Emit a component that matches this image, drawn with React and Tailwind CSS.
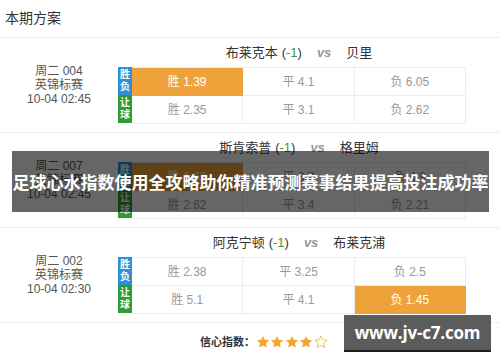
const matches = [
  {
    week: '周二 004',
    league: '英锦标赛',
    time: '10-04 02:45',
    home: '布莱克本',
    handicap: '-1',
    away: '贝里',
    rows: [
      ['胜 1.39', '平 4.1', '负 6.05'],
      ['胜 2.35', '平 3.1', '负 2.62'],
    ],
    pick: [0, 0],
  },
  {
    week: '周二 007',
    league: '英锦标赛',
    time: '10-04 02:45',
    home: '斯肯索普',
    handicap: '-1',
    away: '格里姆',
    rows: [
      ['胜 1.62', '平 3.7', '负 4.9'],
      ['胜 2.62', '平 3.4', '负 2.21'],
    ],
    pick: [0, 0],
  },
  {
    week: '周二 002',
    league: '英锦标赛',
    time: '10-04 02:30',
    home: '阿克宁顿',
    handicap: '-1',
    away: '布莱克浦',
    rows: [
      ['胜 2.38', '平 3.25', '负 2.5'],
      ['胜 5.1', '平 4.1', '负 1.45'],
    ],
    pick: [1, 2],
  },
];

function Star({ filled }) {
  return (
    <svg width="14" height="14" viewBox="0 0 24 24">
      <polygon
        points="12,1.5 15.1,8.3 22.5,9.1 17,14.1 18.5,21.5 12,17.8 5.5,21.5 7,14.1 1.5,9.1 8.9,8.3"
        fill={filled ? '#f3a62b' : 'none'}
        stroke="#f3a62b"
        strokeWidth={filled ? 0 : 1.3}
        strokeLinejoin="round"
      />
    </svg>
  );
}

function Badge({ top, bottom, color }) {
  return (
    <div className={`h-[28px] flex flex-col items-center justify-center text-[10px] leading-[12px] font-bold text-white ${color}`}>
      <span>{top}</span>
      <span>{bottom}</span>
    </div>
  );
}

function Match({ m }) {
  return (
    <div className="h-[95px] flex border-b border-[#eeeeee]">
      <div className="w-[118px] pt-[26px] text-center text-[12px] leading-[14px] text-[#555]">
        <div>{m.week}</div>
        <div>{m.league}</div>
        <div>{m.time}</div>
      </div>
      <div className="w-[348px]">
        <div className="h-[29px] pl-[14px] flex items-center justify-center text-[13px] text-[#333]">
          <span>{m.home}</span>
          <span className="ml-1">
            (<span className="text-[#3a9a3a]">{m.handicap}</span>)
          </span>
          <span className="mx-[15px] italic font-bold text-[#999]">vs</span>
          <span>{m.away}</span>
        </div>
        <div className="flex">
          <div className="w-[14px]">
            <Badge top="胜" bottom="负" color="bg-[#2f8fd6]" />
            <Badge top="让" bottom="球" color="bg-[#2e9b35]" />
          </div>
          <div className="w-[334px] grid grid-cols-3 border-t border-[#ececec]">
            {m.rows.map((row, r) =>
              row.map((cell, c) => {
                const on = m.pick[0] === r && m.pick[1] === c;
                return (
                  <div
                    key={`${r}-${c}`}
                    className={`h-[28px] flex items-center justify-center text-[12px] border-b border-r border-[#ececec] ${
                      on ? 'bg-[#f0a23a] text-white border-[#f0a23a]' : 'text-[#999]'
                    }`}
                  >
                    {cell}
                  </div>
                );
              })
            )}
          </div>
        </div>
      </div>
    </div>
  );
}

export default function App() {
  return (
    <div
      className="relative w-[500px] h-[362px] overflow-hidden bg-white"
      style={{ fontFamily: '"Liberation Sans", "Noto Sans CJK SC", sans-serif' }}
    >
      <div className="h-[38px] px-[5px] flex items-center text-[14px] text-[#333] border-b border-[#eeeeee]">
        本期方案
      </div>

      {matches.map((m) => (
        <Match key={m.week} m={m} />
      ))}

      <div className="pl-[200px] pt-[11px] flex items-center gap-[0.5px] text-[11px] font-bold text-[#333]">
        <span>信心指数：</span>
        <Star filled />
        <Star filled />
        <Star filled />
        <Star filled />
        <Star />
      </div>

      {/* overlay headline */}
      <div className="absolute left-[12px] top-[151px] w-[477px] h-[61px] bg-black/60 flex items-center justify-center">
        <span
          className="text-white text-[17px] font-bold whitespace-nowrap"
          style={{ fontFamily: '"Noto Sans CJK SC", sans-serif' }}
        >
          足球心水指数使用全攻略助你精准预测赛事结果提高投注成功率
        </span>
      </div>

      {/* watermark */}
      <div className="absolute left-[344px] top-[315px] w-[147px] h-[37px] bg-[#5c5c5c] border-b-2 border-[#1e1e1e] flex items-center justify-center">
        <span
          className="text-white text-[17px] font-bold whitespace-nowrap tracking-[-0.2px]"
          style={{ fontFamily: '"Open Sans", sans-serif' }}
        >
          www.jv-c7.com
        </span>
      </div>
    </div>
  );
}
